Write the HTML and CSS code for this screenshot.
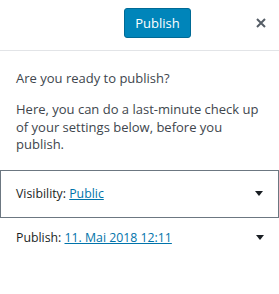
FILE: index.html
```html
<!DOCTYPE html>
<html lang="en">
<head>
  <meta charset="UTF-8" />
  <title>Publish panel</title>
  <link rel="stylesheet" href="styles.css">
</head>
<body>
  <div class="panel">
    <div class="panel-header">
      <button class="btn-publish">Publish</button>
      <button class="btn-close" aria-label="Close">
        <svg width="10" height="10" viewBox="0 0 10 10"><path d="M1 1L9 9M9 1L1 9" stroke="#555d66" stroke-width="2"/></svg>
      </button>
    </div>

    <div class="intro">
      <p class="intro-title">Are you ready to publish?</p>
      <p class="intro-text">Here, you can do a last-minute check up of your settings below, before you publish.</p>
    </div>

    <div class="setting setting-open">
      <span>Visibility: <a href="#">Public</a></span>
      <svg class="caret" width="8" height="5" viewBox="0 0 8 5"><polygon points="0,0 8,0 4,5" fill="#191e23"/></svg>
    </div>

    <div class="setting">
      <span>Publish: <a href="#">11. Mai 2018 12:11</a></span>
      <svg class="caret" width="8" height="5" viewBox="0 0 8 5"><polygon points="0,0 8,0 4,5" fill="#191e23"/></svg>
    </div>
  </div>
</body>
</html>
```

FILE: styles.css
```css
body {
  margin: 0;
  font-family: "Open Sans", "Noto Sans", sans-serif;
  font-size: 13px;
  color: #191e23;
  background: #fff;
}
.panel {
  width: 279px;
}
.panel-header {
  display: flex;
  justify-content: flex-end;
  align-items: flex-start;
  height: 51px;
  padding-top: 8px;
  box-sizing: border-box;
  border-bottom: 1px solid #e2e4e7;
}
.btn-publish {
  font-family: inherit;
  font-size: 13px;
  color: #fff;
  background: #0085ba;
  border: 1px solid #006a95;
  border-radius: 3px;
  width: 67px;
  height: 30px;
  padding: 0;
  margin-right: 52px;
  cursor: pointer;
}
.btn-close {
  width: 36px;
  height: 30px;
  padding: 0;
  border: none;
  background: none;
  display: flex;
  align-items: center;
  justify-content: center;
}
.intro {
  padding: 0 16px;
  color: #40464d;
  line-height: 18px;
}
.intro-title {
  margin: 18px 0 14px;
}
.intro-text {
  margin: 0 0 16px;
  line-height: 17.5px;
}
.setting {
  display: flex;
  align-items: center;
  justify-content: space-between;
  height: 40px;
  padding: 0 15px 0 16px;
  font-size: 12.3px;
}
.setting-open {
  height: 48px;
  box-sizing: border-box;
  border: 1px solid #6c7781;
  padding-left: 15px;
}
.setting a {
  color: #0073aa;
}
.caret {
  display: block;
}
```
